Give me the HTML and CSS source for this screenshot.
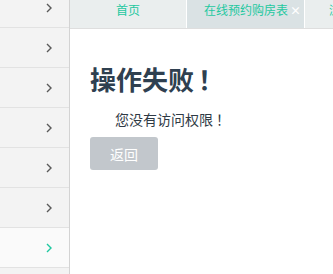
FILE: index.html
```html
<!DOCTYPE html>
<html lang="zh-CN">
<head>
<meta charset="utf-8">
<title>操作失败</title>
<link rel="stylesheet" href="styles.css">
</head>
<body>
<div class="app">
  <aside class="sidebar">
    <ul class="menu">
      <li class="item"><svg class="chev" viewBox="0 0 6 10"><polyline points="1,1 5,5 1,9"/></svg></li>
      <li class="item"><svg class="chev" viewBox="0 0 6 10"><polyline points="1,1 5,5 1,9"/></svg></li>
      <li class="item"><svg class="chev" viewBox="0 0 6 10"><polyline points="1,1 5,5 1,9"/></svg></li>
      <li class="item"><svg class="chev" viewBox="0 0 6 10"><polyline points="1,1 5,5 1,9"/></svg></li>
      <li class="item"><svg class="chev" viewBox="0 0 6 10"><polyline points="1,1 5,5 1,9"/></svg></li>
      <li class="item"><svg class="chev" viewBox="0 0 6 10"><polyline points="1,1 5,5 1,9"/></svg></li>
      <li class="item active"><svg class="chev" viewBox="0 0 6 10"><polyline points="1,1 5,5 1,9"/></svg></li>
      <li class="item"></li>
    </ul>
  </aside>
  <main class="main">
    <nav class="tabs">
      <div class="tab">首页</div>
      <div class="tab current">在线预约购房表<span class="close">×</span></div>
      <div class="tab third">浏览记录</div>
    </nav>
    <section class="content">
      <h2 class="title">操作失败<span class="bang">！</span></h2>
      <p class="msg">您没有访问权限<span class="bang-s">！</span></p>
      <button class="btn" type="button">返回</button>
    </section>
  </main>
</div>
</body>
</html>
```
FILE: styles.css
```css
* { box-sizing: border-box; }
html, body { margin: 0; padding: 0; background: #fff; }
body {
  font-family: "Noto Sans CJK SC", "Noto Sans", sans-serif;
  width: 333px;
  height: 274px;
  overflow: hidden;
}
.app { display: flex; height: 274px; }
.sidebar {
  width: 70px;
  flex: none;
  background: #f3f3f3;
  border-right: 1px solid #d3d3d3;
  overflow: hidden;
}
.menu { list-style: none; margin: -12px 0 0; padding: 0; }
.item {
  height: 40px;
  border-bottom: 1px solid #e2e2e2;
  display: flex;
  align-items: center;
  justify-content: flex-end;
  padding-right: 17px;
}
.item.active { background: #fafafa; }
.chev { width: 6px; height: 10px; fill: none; stroke: #595959; stroke-width: 1.4; }
.item.active .chev { stroke: #1ec8a0; }
.main { flex: 1; display: flex; flex-direction: column; min-width: 0; }
.tabs {
  height: 29px;
  flex: none;
  display: flex;
  background: #eaeeee;
  border-bottom: 1px solid #dedede;
  overflow: hidden;
  white-space: nowrap;
}
.tab {
  width: 117px;
  flex: none;
  font-size: 12px;
  line-height: 20px;
  color: #1ec8a0;
  text-align: center;
  border-right: 1px solid #fff;
}
.tab.current {
  width: 118px;
  background: #dae2e4;
  text-align: left;
  padding-left: 17px;
}
.tab.third { text-align: left; padding-left: 24px; border-right: none; }
.close { color: #fff; font-weight: bold; font-size: 11px; margin-left: 2px; }
.content { padding: 33px 20px 0; }
.title {
  margin: 0;
  font-size: 26px;
  line-height: 34px;
  font-weight: bold;
  color: #2f4050;
}
.bang { margin-left: 4px; }
.bang-s { margin-left: 3px; }
.msg {
  margin: 13px 0 0;
  padding-left: 25px;
  font-size: 14px;
  line-height: 20px;
  color: #2f3a45;
}
.btn {
  margin-top: 8px;
  width: 68px;
  height: 33px;
  border: none;
  border-radius: 3px;
  background: #c2c7cc;
  color: #fff;
  font-family: inherit;
  font-size: 14px;
  padding: 0;
}
```
